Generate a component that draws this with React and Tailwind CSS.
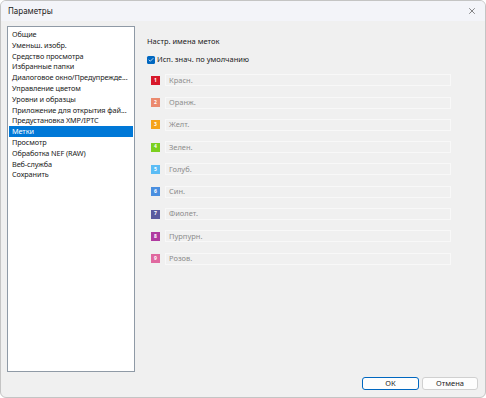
import { Check, X } from "lucide-react";

const items = [
  "Общие",
  "Уменьш. изобр.",
  "Средство просмотра",
  "Избранные папки",
  "Диалоговое окно/Предупрежде...",
  "Управление цветом",
  "Уровни и образцы",
  "Приложение для открытия фай...",
  "Предустановка XMP/IPTC",
  "Метки",
  "Просмотр",
  "Обработка NEF (RAW)",
  "Веб-служба",
  "Сохранить",
];

const labels = [
  { n: 1, name: "Красн.", color: "bg-[#d7182a]" },
  { n: 2, name: "Оранж.", color: "bg-[#eb8a6f]" },
  { n: 3, name: "Желт.", color: "bg-[#f5a31c]" },
  { n: 4, name: "Зелен.", color: "bg-[#7ccf1f]" },
  { n: 5, name: "Голуб.", color: "bg-[#5bbcf5]" },
  { n: 6, name: "Син.", color: "bg-[#4a8fe0]" },
  { n: 7, name: "Фиолет.", color: "bg-[#5a5b9f]" },
  { n: 8, name: "Пурпурн.", color: "bg-[#b03aa0]" },
  { n: 9, name: "Розов.", color: "bg-[#e0689f]" },
];

export default function App() {
  return (
    <div className="w-[486px] h-[398px] bg-white font-['Noto_Sans',sans-serif] text-[#1a1a1a]">
      <div className="w-full h-full flex flex-col rounded-[6px] border border-[#c4c4c4] bg-[#f0f0f0] overflow-hidden">
        {/* title bar */}
        <div className="h-[20px] flex items-center justify-between pl-[7px] pr-[8px] bg-[#f3f4f9] text-[8px]">
          <span>Параметры</span>
          <X size={10} strokeWidth={1.4} className="text-[#333]" />
        </div>

        <div className="flex-1 flex pl-[6px] pt-[5px]">
          {/* left list */}
          <div className="w-[128px] h-[346px] bg-white border border-[#8f9aa6] py-[2px] flex flex-col">
            {items.map((it) => (
              <div
                key={it}
                className={
                  "h-[10.8px] leading-[10.8px] text-[7.3px] tracking-[-0.1px] pl-[3px] mx-[1px] whitespace-nowrap " +
                  (it === "Метки" ? "bg-[#0078d7] text-white" : "")
                }
              >
                {it}
              </div>
            ))}
          </div>

          {/* right panel */}
          <div className="flex-1 flex flex-col pl-[12px] pt-[10px] text-[7.5px]">
            <div className="leading-[10px]">Настр. имена меток</div>
            <div className="flex items-center gap-[2px] mt-[8px]">
              <span className="w-[8px] h-[8px] rounded-[1.5px] bg-[#0067c0] flex items-center justify-center">
                <Check size={6} strokeWidth={3} className="text-white" />
              </span>
              <span>Исп. знач. по умолчанию</span>
            </div>
            <div className="flex flex-col gap-[10.3px] mt-[9px] pl-[4px]">
              {labels.map((l) => (
                <div key={l.n} className="flex items-center gap-[5px] h-[12px]">
                  <span
                    className={
                      "w-[9px] h-[9px] flex items-center justify-center text-white text-[5px] font-bold " +
                      l.color
                    }
                  >
                    {l.n}
                  </span>
                  <div className="w-[286px] h-[12px] border border-[#f8f8f8] flex items-center pl-[3px] text-[#8c8c8c]">
                    {l.name}
                  </div>
                </div>
              ))}
            </div>
          </div>
        </div>

        {/* buttons */}
        <div className="flex justify-end gap-[3px] pr-[7px] pb-[7px] pt-[5px] text-[7.5px]">
          <button className="w-[57px] h-[13px] bg-[#fdfdfd] border border-[#0067c0] rounded-[3px] flex items-center justify-center">
            ОК
          </button>
          <button className="w-[56px] h-[13px] bg-[#fdfdfd] border border-[#d0d0d0] rounded-[3px] flex items-center justify-center">
            Отмена
          </button>
        </div>
      </div>
    </div>
  );
}
